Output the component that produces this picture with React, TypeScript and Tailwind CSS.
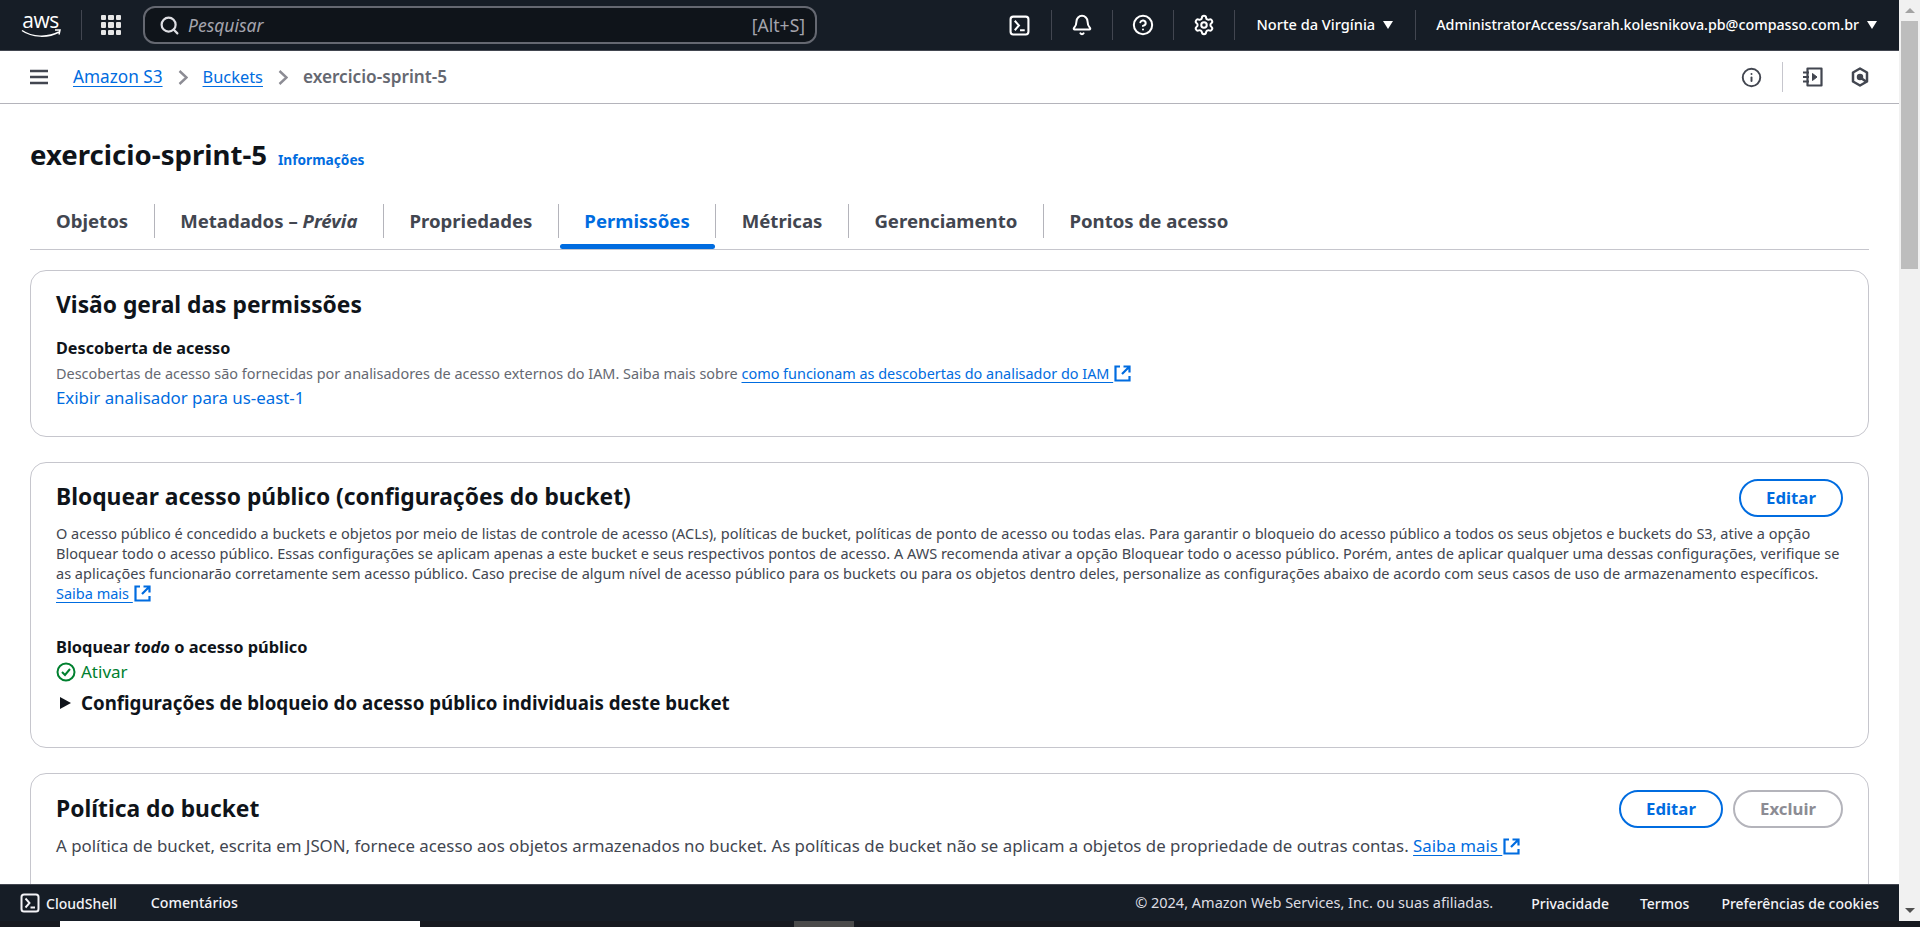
import { ReactNode } from 'react';
import { Bell, CircleHelp, Info, Search, Settings } from 'lucide-react';

const LINK = 'text-[#006ce0]';

function TerminalIcon({ className }: { className?: string }) {
  return (
    <svg viewBox="0 0 20 20" fill="none" stroke="currentColor" strokeWidth="2" className={className}>
      <rect x="1.500" y="1.500" width="17" height="17" rx="2.500" />
      <path d="M5.500 5.500l4 4.500-4 4.500M10.500 14.500H15" strokeWidth="1.9" />
    </svg>
  );
}

function ExternalIcon() {
  return (
    <svg viewBox="0 0 17 17" fill="none" stroke="#006ce0" strokeWidth="2.2" className="inline-block w-[17px] h-[17px] ml-[1px] align-[-3px]">
      <path d="M6 1.500H1.500v14h14V11" />
      <path d="M9.500 1.500h6v6M15 2L8 9" />
    </svg>
  );
}

function Caret() {
  return <span className="w-0 h-0 border-x-[5.500px] border-x-transparent border-t-[8px] border-t-white" />;
}

function Chevron() {
  return (
    <svg viewBox="0 0 10 15" fill="none" stroke="#8c8c94" strokeWidth="2.4" className="w-[10px] h-[15px] mx-[15px]">
      <path d="M1.500 1l7 6.500-7 6.500" />
    </svg>
  );
}

function Underlined({ children }: { children: ReactNode }) {
  return <a className={`${LINK} underline underline-offset-[3px] decoration-1`}>{children}</a>;
}

function NavDivider() {
  return <div className="w-px h-[30px] bg-[#424650]" />;
}

function TopNav() {
  return (
    <header className="h-[51px] shrink-0 bg-[#161d26] border-b border-[#424650] flex items-center text-white">
      <div className="w-[81px] shrink-0 flex flex-col items-center">
        <span className="font-['Open_Sans',sans-serif] text-[21px] leading-[17px] tracking-[-0.5px]">aws</span>
        <svg viewBox="0 0 40 9" className="w-[40px] h-[9px]" fill="none" stroke="white" strokeWidth="1.5">
          <path d="M1 1.500c10 7 26 7.500 37 1.500" />
          <path d="M34 1h5l-1 4.500" />
        </svg>
      </div>
      <NavDivider />
      <div className="ml-[19px] w-[20px] grid grid-cols-3 gap-[2px]">
        {Array.from({ length: 9 }).map((_, i) => (
          <span key={i} className="w-[5.300px] h-[5.300px] bg-[#e6e6e6] rounded-[1px]" />
        ))}
      </div>
      <div className="ml-[22px] w-[674px] h-[38px] rounded-[12px] border-2 border-[#656871] bg-[#0f141a] flex items-center pl-[14px] pr-[10px]">
        <Search className="w-[21px] h-[21px] text-[#dedee3]" strokeWidth={2.5} />
        <span className="ml-[8px] italic text-[17.500px] text-[#a4a4ad]">Pesquisar</span>
        <span className="ml-auto text-[17.500px] text-[#a4a4ad]">[Alt+S]</span>
      </div>
      <div className="ml-auto flex items-center pr-[22px]">
        <TerminalIcon className="w-[21px] h-[21px] mr-[21px]" />
        <NavDivider />
        <Bell className="w-[22px] h-[22px] mx-[19px]" strokeWidth={2.2} />
        <NavDivider />
        <CircleHelp className="w-[22px] h-[22px] mx-[19px]" strokeWidth={2.2} />
        <NavDivider />
        <Settings className="w-[22px] h-[22px] mx-[19px]" strokeWidth={2.2} />
        <NavDivider />
        <span className="ml-[21px] text-[14.600px] font-medium">Norte da Virgínia</span>
        <span className="ml-[8px] flex">
          <Caret />
        </span>
        <div className="ml-[22px]">
          <NavDivider />
        </div>
        <span className="ml-[20px] text-[14.250px] font-medium">AdministratorAccess/sarah.kolesnikova.pb@compasso.com.br</span>
        <span className="ml-[8px] flex">
          <Caret />
        </span>
      </div>
    </header>
  );
}

function Breadcrumbs() {
  return (
    <div className="h-[53px] shrink-0 bg-white border-b border-[#b4b4bb] flex items-center pl-[30px] pr-[30px]">
      <svg viewBox="0 0 18 16" fill="none" stroke="#424650" strokeWidth="2.5" className="w-[18px] h-[16px]">
        <path d="M0 2h18M0 8h18M0 14h18" />
      </svg>
      <div className="ml-[25px] text-[17.200px]">
        <Underlined>Amazon S3</Underlined>
      </div>
      <Chevron />
      <div className="text-[16.400px]">
        <Underlined>Buckets</Underlined>
      </div>
      <Chevron />
      <span className="text-[17.200px] font-semibold text-[#656871]">exercicio-sprint-5</span>
      <div className="ml-auto flex items-center text-[#424650]">
        <Info className="w-[21px] h-[21px]" strokeWidth={2.2} />
        <div className="mx-[20px] w-px h-[30px] bg-[#c6c6cd]" />
        <svg viewBox="0 0 20 20" fill="none" stroke="currentColor" strokeWidth="2.2" className="w-[20px] h-[20px]">
          <path d="M4.500 1.500h14v17h-14z" strokeLinejoin="round" />
          <path d="M0 5.500h6M0 10h6M0 14.500h6" />
          <path d="M9.500 6.500l4.500 3.500-4.500 3.500z" fill="currentColor" strokeWidth="1" />
        </svg>
        <svg viewBox="0 0 18 20" fill="none" stroke="currentColor" strokeWidth="2.500" className="ml-[28px] w-[18px] h-[20px]">
          <path d="M9 1.500l7 4v9l-7 4-7-4v-9z" strokeLinejoin="round" />
          <circle cx="9" cy="10" r="2.500" fill="currentColor" strokeWidth="1.500" />
          <path d="M10 11l5 3.500" />
        </svg>
      </div>
    </div>
  );
}

function Tab({ children, active, last }: { children: ReactNode; active?: boolean; last?: boolean }) {
  return (
    <div className={`h-[34px] px-[25.500px] first:pl-[26px] flex items-center relative ${last ? '' : 'border-r border-[#b4b4bb]'} ${active ? 'text-[#006ce0]' : 'text-[#424650]'}`}>
      {children}
      {active && <span className="absolute left-[1px] right-0 top-[40px] h-[5px] rounded-[3px] bg-[#006ce0]" />}
    </div>
  );
}

function Tabs() {
  return (
    <div className="mt-[33px] h-[46px] border-b border-[#c6c6cd] flex items-start text-[18.600px] font-bold">
      <Tab>Objetos</Tab>
      <Tab>
        Metadados –&nbsp;<em>Prévia</em>
      </Tab>
      <Tab>Propriedades</Tab>
      <Tab active>Permissões</Tab>
      <Tab>Métricas</Tab>
      <Tab>Gerenciamento</Tab>
      <Tab last>Pontos de acesso</Tab>
    </div>
  );
}

function Card({ children, className }: { children: ReactNode; className?: string }) {
  return <section className={`rounded-[16px] border border-[#c6c6cd] bg-white px-[25px] ${className ?? ''}`}>{children}</section>;
}

function PillButton({ children, disabled }: { children: ReactNode; disabled?: boolean }) {
  return (
    <button className={`h-[38px] rounded-[20px] border-2 text-[16.800px] font-bold ${disabled ? 'w-[110px] border-[#b4b4bb] text-[#8c8c94]' : 'w-[104px] border-[#006ce0] text-[#006ce0]'}`}>
      {children}
    </button>
  );
}

function Content() {
  return (
    <main className="flex-1 min-h-0 overflow-hidden bg-white px-[30px] text-[#0f141a]">
      <div className="pt-[34px] flex items-baseline">
        <h1 className="text-[27.600px] leading-[32px] font-bold">exercicio-sprint-5</h1>
        <a className={`ml-[11px] text-[13.700px] font-bold ${LINK}`}>Informações</a>
      </div>
      <Tabs />
      <Card className="mt-[20px] h-[167px] pt-[19px]">
        <h2 className="text-[22.800px] leading-[30px] font-bold">Visão geral das permissões</h2>
        <h3 className="mt-[18px] text-[16.200px] leading-[20px] font-bold">Descoberta de acesso</h3>
        <p className="mt-[6px] text-[14.430px] leading-[20px] text-[#656871]">
          Descobertas de acesso são fornecidas por analisadores de acesso externos do IAM. Saiba mais sobre{' '}
          <Underlined>como funcionam as descobertas do analisador do IAM&nbsp;</Underlined>
          <ExternalIcon />
        </p>
        <a className={`block mt-[2px] text-[16.850px] leading-[24px] ${LINK}`}>Exibir analisador para us-east-1</a>
      </Card>
      <Card className="mt-[25px] h-[286px] pt-[16px]">
        <div className="flex items-start justify-between">
          <h2 className="mt-[3px] text-[22.800px] leading-[30px] font-bold">Bloquear acesso público (configurações do bucket)</h2>
          <PillButton>Editar</PillButton>
        </div>
        <p className="mt-[6px] text-[14.500px] leading-[20px] text-[#424650] whitespace-nowrap">
          O acesso público é concedido a buckets e objetos por meio de listas de controle de acesso (ACLs), políticas de bucket, políticas de ponto de acesso ou todas elas. Para garantir o bloqueio do acesso público a todos os seus objetos e buckets do S3, ative a opção
          <br />
          Bloquear todo o acesso público. Essas configurações se aplicam apenas a este bucket e seus respectivos pontos de acesso. A AWS recomenda ativar a opção Bloquear todo o acesso público. Porém, antes de aplicar qualquer uma dessas configurações, verifique se
          <br />
          as aplicações funcionarão corretamente sem acesso público. Caso precise de algum nível de acesso público para os buckets ou para os objetos dentro deles, personalize as configurações abaixo de acordo com seus casos de uso de armazenamento específicos.
          <br />
          <Underlined>Saiba mais&nbsp;</Underlined>
          <ExternalIcon />
        </p>
        <h3 className="mt-[34px] text-[16.400px] leading-[20px] font-bold">
          Bloquear <em>todo</em> o acesso público
        </h3>
        <div className="mt-[3px] flex items-center text-[17px] leading-[24px] text-[#00802f]">
          <svg viewBox="0 0 20 20" fill="none" stroke="currentColor" strokeWidth="2" className="w-[20px] h-[20px] mr-[5px]">
            <circle cx="10" cy="10" r="8.500" />
            <path d="M6 10l3 3 5-6" />
          </svg>
          Ativar
        </div>
        <div className="mt-[7px] flex items-center text-[18.700px] leading-[24px] font-bold">
          <span className="ml-[4px] mr-[10px] w-0 h-0 border-y-[6.500px] border-y-transparent border-l-[11px] border-l-[#0f141a]" />
          Configurações de bloqueio do acesso público individuais deste bucket
        </div>
      </Card>
      <Card className="mt-[25px] h-[300px] pt-[16px]">
        <div className="flex items-start justify-between">
          <h2 className="mt-[4px] text-[22.800px] leading-[30px] font-bold">Política do bucket</h2>
          <div className="flex gap-[10px]">
            <PillButton>Editar</PillButton>
            <PillButton disabled>Excluir</PillButton>
          </div>
        </div>
        <p className="mt-[6px] text-[16.850px] leading-[24px] text-[#424650]">
          A política de bucket, escrita em JSON, fornece acesso aos objetos armazenados no bucket. As políticas de bucket não se aplicam a objetos de propriedade de outras contas.{' '}
          <Underlined>Saiba mais&nbsp;</Underlined>
          <ExternalIcon />
        </p>
      </Card>
    </main>
  );
}

function Footer() {
  return (
    <footer className="h-[37px] shrink-0 bg-[#161d26] border-t border-[#424650] flex items-center px-[20px] text-[14px] font-medium text-[#f3f3f7]">
      <TerminalIcon className="w-[20px] h-[20px]" />
      <span className="ml-[6px]">CloudShell</span>
      <span className="ml-[34px] text-[14.200px]">Comentários</span>
      <span className="ml-auto text-[14.500px] text-[#dedee3] font-normal">© 2024, Amazon Web Services, Inc. ou suas afiliadas.</span>
      <span className="ml-[38px]">Privacidade</span>
      <span className="ml-[31px]">Termos</span>
      <span className="ml-[32px]">Preferências de cookies</span>
    </footer>
  );
}

function Scrollbar() {
  return (
    <div className="w-[21px] shrink-0 bg-[#f1f1f1] flex flex-col items-center">
      <div className="h-[21px] flex items-center">
        <span className="w-0 h-0 border-x-[5px] border-x-transparent border-b-[5px] border-b-[#a3a3a3]" />
      </div>
      <div className="w-[17px] h-[248px] bg-[#bdbdbd]" />
      <div className="mt-auto h-[21px] flex items-center">
        <span className="w-0 h-0 border-x-[5px] border-x-transparent border-t-[5px] border-t-[#505050]" />
      </div>
    </div>
  );
}

export default function App() {
  return (
    <div className="h-[927px] overflow-hidden flex flex-col bg-[#16191f] font-['Noto_Sans',sans-serif]">
      <div className="flex-1 min-h-0 flex">
        <div className="flex-1 min-w-0 flex flex-col">
          <TopNav />
          <Breadcrumbs />
          <Content />
          <Footer />
        </div>
        <Scrollbar />
      </div>
      <div className="h-[6px] shrink-0 flex">
        <div className="ml-[60px] w-[360px] bg-white" />
        <div className="ml-[374px] w-[60px] bg-[#4a4a4a]" />
      </div>
    </div>
  );
}
